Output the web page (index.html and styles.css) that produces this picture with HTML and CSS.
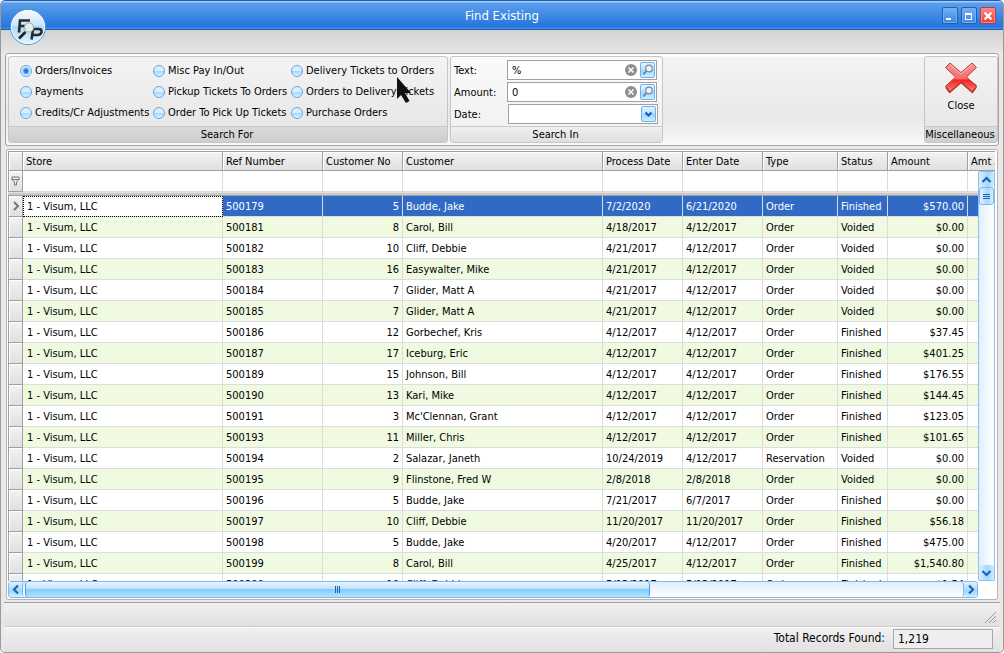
FILE: index.html
```html
<!DOCTYPE html>
<html lang="en">
<head>
<meta charset="utf-8">
<title>Find Existing</title>
<link rel="stylesheet" href="styles.css">
</head>
<body>
<div class="window">
  <header class="titlebar">
    <h1 class="title">Find Existing</h1>
    <div class="window-buttons">
      <button class="win-btn" aria-label="Minimize"><svg width="14" height="14" viewBox="0 0 14 14"><path d="M3 10h5" stroke="#fff" stroke-width="2"/></svg></button>
      <button class="win-btn" aria-label="Maximize"><svg width="14" height="14" viewBox="0 0 14 14"><path d="M3.500 4v7M9.500 4v7M3 10.500h7" stroke="#fff"/><path d="M3 5h7" stroke="#fff" stroke-width="2"/></svg></button>
      <button class="win-btn win-close" aria-label="Close window"><svg width="14" height="14" viewBox="0 0 14 14"><path d="M3.500 3.500l7 7M10.500 3.500l-7 7" stroke="#fff" stroke-width="2.400"/></svg></button>
    </div>
  </header>
  <svg class="app-icon" width="38" height="38" viewBox="0 0 38 38" aria-hidden="true">
    <defs>
      <linearGradient id="orb" x2="0" y2="1"><stop offset="0" stop-color="#f7fcff"/><stop offset=".45" stop-color="#c9e6fb"/><stop offset=".5" stop-color="#a9d7f9"/><stop offset="1" stop-color="#e2f7ff"/></linearGradient>
    </defs>
    <circle cx="19" cy="19" r="17.500" fill="url(#orb)" stroke="#4c8fd4"/>
    <circle cx="19" cy="19" r="16.500" fill="none" stroke="#fff" opacity=".8"/>
    <path d="M10 24.500L11 12.500h10M10.500 18h6" fill="none" stroke="#2b2b2b" stroke-width="2.600"/>
    <path d="M22.500 31.500L24 21.500M20.500 21h9q3.500 0 3 3t-4 3h-5" fill="none" stroke="#2b2b2b" stroke-width="2.600"/>
    <path d="M16.500 24l-6.500 6.500" stroke="#222" stroke-width="2.600"/>
    <circle cx="20" cy="19.500" r="4.500" fill="#e2efeb" stroke="#9fb1af" stroke-width="1.200"/>
  </svg>
  <section class="ribbon">
    <fieldset class="group group-for">
      <div class="group-body radios">
        <label class="radio"><input type="radio" name="kind" checked>Orders/Invoices</label>
        <label class="radio"><input type="radio" name="kind">Misc Pay In/Out</label>
        <label class="radio"><input type="radio" name="kind">Delivery Tickets to Orders</label>
        <label class="radio"><input type="radio" name="kind">Payments</label>
        <label class="radio"><input type="radio" name="kind">Pickup Tickets To Orders</label>
        <label class="radio"><input type="radio" name="kind">Orders to Delivery Tickets</label>
        <label class="radio"><input type="radio" name="kind">Credits/Cr Adjustments</label>
        <label class="radio"><input type="radio" name="kind">Order To Pick Up Tickets</label>
        <label class="radio"><input type="radio" name="kind">Purchase Orders</label>
      </div>
      <div class="caption">Search For</div>
    </fieldset>
    <fieldset class="group group-in">
      <div class="group-body fields">
        <label for="text">Text:</label>
        <div class="field">
          <input id="text" type="text" value="%">
          <button class="clear" aria-label="Clear text"><svg width="12" height="12" viewBox="0 0 12 12"><circle cx="6" cy="6" r="6" fill="#8e8e8e"/><path d="M3.500 3.500l5 5M8.500 3.500l-5 5" stroke="#fff" stroke-width="1.500"/></svg></button>
          <button class="blue-btn" aria-label="Find text"><svg width="13" height="14" viewBox="0 0 13 14"><circle cx="8" cy="5.500" r="3.300" fill="#e4f4ff" stroke="#76899c" stroke-width="1.200"/><path d="M5.500 8L2 11.500" stroke="#76899c" stroke-width="1.800"/></svg></button>
        </div>
        <label for="amount">Amount:</label>
        <div class="field">
          <input id="amount" type="text" value="0">
          <button class="clear" aria-label="Clear amount"><svg width="12" height="12" viewBox="0 0 12 12"><circle cx="6" cy="6" r="6" fill="#8e8e8e"/><path d="M3.500 3.500l5 5M8.500 3.500l-5 5" stroke="#fff" stroke-width="1.500"/></svg></button>
          <button class="blue-btn" aria-label="Find amount"><svg width="13" height="14" viewBox="0 0 13 14"><circle cx="8" cy="5.500" r="3.300" fill="#e4f4ff" stroke="#76899c" stroke-width="1.200"/><path d="M5.500 8L2 11.500" stroke="#76899c" stroke-width="1.800"/></svg></button>
        </div>
        <label for="date">Date:</label>
        <div class="field field-date">
          <select id="date"><option></option></select>
          <span class="blue-btn date-arrow"><svg width="13" height="14" viewBox="0 0 13 14"><path d="M3.500 5.500l3 3 3-3" fill="none" stroke="#1460b8" stroke-width="2.200"/></svg></span>
        </div>
      </div>
      <div class="caption">Search In</div>
    </fieldset>
    <fieldset class="group group-misc">
      <button class="close-btn">
        <svg width="34" height="34" viewBox="0 0 34 34" aria-hidden="true">
          <defs><linearGradient id="red" x2="0" y2="1"><stop offset="0" stop-color="#f29a9a"/><stop offset=".54" stop-color="#fb6a6a"/><stop offset=".6" stop-color="#f42323"/><stop offset="1" stop-color="#fb8070"/></linearGradient></defs>
          <path d="M1.500 27l4 5.500L17 22.500 28.500 32.500l4-5.500v-3L22 16 17 18 2 24z" fill="#b52c10"/>
          <path d="M6 2L17 11.500 28 2l4.500 4.500L22.500 16 32.500 25.500l-4.500 5L17 21 6 30.500l-4.500-5L11.500 16 1.500 6.500z" fill="url(#red)" stroke="#c23a3a" stroke-linejoin="round"/>
          <path d="M6 3.500l11 9.500 11-9.500" fill="none" stroke="#ffc4c4" stroke-width=".8"/>
        </svg>
        Close
      </button>
      <div class="caption">Miscellaneous</div>
    </fieldset>
  </section>
  <main class="grid">
    <div class="rows">
      <table class="records">
        <colgroup><col class="c-mark"><col class="c-store"><col class="c-ref"><col class="c-no"><col class="c-name"><col class="c-date"><col class="c-date"><col class="c-type"><col class="c-status"><col class="c-amount"><col></colgroup>
        <thead>
          <tr><th></th><th>Store</th><th>Ref Number</th><th>Customer No</th><th>Customer</th><th>Process Date</th><th>Enter Date</th><th>Type</th><th>Status</th><th>Amount</th><th>Amt Applied</th></tr>
          <tr class="filter"><td class="mark"><svg width="9" height="10" viewBox="0 0 9 10"><path d="M1 1h7v2.500L5.500 6v3h-2V6L1 3.500zM1 3.500h7" fill="none" stroke="#777"/></svg></td><td></td><td></td><td></td><td></td><td></td><td></td><td></td><td></td><td></td><td></td></tr>
          <tr class="divider"><td colspan="11"></td></tr>
        </thead>
        <tbody id="records"></tbody>
      </table>
      <div class="vscroll">
        <button class="sb-btn" aria-label="Scroll up"><svg width="11" height="8" viewBox="0 0 11 8"><path d="M1.500 6l4-4 4 4" fill="none" stroke="#1565bd" stroke-width="2.200"/></svg></button>
        <div class="vthumb"><i></i><i></i><i></i></div>
        <button class="sb-btn sb-down" aria-label="Scroll down"><svg width="11" height="8" viewBox="0 0 11 8"><path d="M1.500 2l4 4 4-4" fill="none" stroke="#1565bd" stroke-width="2.200"/></svg></button>
      </div>
    </div>
    <div class="hscroll">
      <button class="sb-btn" aria-label="Scroll left"><svg width="8" height="11" viewBox="0 0 8 11"><path d="M6 1.500l-4 4 4 4" fill="none" stroke="#1565bd" stroke-width="2.200"/></svg></button>
      <div class="htrack"><div class="hthumb"><i></i><i></i><i></i></div></div>
      <button class="sb-btn" aria-label="Scroll right"><svg width="8" height="11" viewBox="0 0 8 11"><path d="M2 1.500l4 4-4 4" fill="none" stroke="#1565bd" stroke-width="2.200"/></svg></button>
    </div>
  </main>
  <div class="bar"><svg width="12" height="12" viewBox="0 0 12 12"><path d="M1 12L12 1M5 12l7-7M9 12l3-3" stroke="#999"/></svg></div>
  <footer class="bar status">
    <label for="total">Total Records Found:</label>
    <input id="total" type="text" value="1,219" readonly>
  </footer>
  <svg class="pointer" width="18" height="29" viewBox="0 0 18 29" aria-hidden="true"><path d="M2 1v22l4-4 5 8 3.500-2-4.500-8h6z" fill="#111"/></svg>
</div>
<script src="records.js"></script>
</body>
</html>
```

FILE: styles.css
```css
* { box-sizing: border-box; }
body {
  margin: 0;
  font: 11px/13px "DejaVu Sans Condensed", "Noto Sans", sans-serif;
  color: #000;
}
input, button, select { font: inherit; color: inherit; margin: 0; padding: 0; }
button { border: 0; background: none; }
svg { display: block; flex: none; }
.window {
  position: relative;
  display: flex;
  flex-direction: column;
  height: 100vh;
  border-left: 1px solid #999;
  border-right: 1px solid #999;
  border-bottom: 1px solid #999;
  border-radius: 5px;
  background: #e9e9e9;
  overflow: hidden;
}
.titlebar {
  display: flex;
  align-items: center;
  justify-content: center;
  position: relative;
  height: 30px;
  margin: 0 -1px;
  padding-top: 2px;
  flex: none;
  border: 1px solid #1c62b4;
  border-bottom-color: #1b5fb0;
  border-radius: 5px 5px 0 0;
  background: linear-gradient(#a6cbf7 0 1px, #5c9fec 2px, #2474dc 26px, #4488e2 27px);
}
.title { margin: 0; font: 13px/18px "DejaVu Sans Condensed", "Noto Sans", sans-serif; color: #fff; }
.window-buttons { position: absolute; right: 7px; top: 6px; display: flex; gap: 3px; }
.win-btn {
  display: flex;
  align-items: center;
  justify-content: center;
  width: 16px;
  height: 17px;
  border: 1px solid #1e60b3;
  border-radius: 2px;
  background: linear-gradient(#75b0f2, #3b86e1);
  box-shadow: inset 0 0 0 1px #76aef0;
}
.win-close { border-color: #b33a4d; background: linear-gradient(#f88, #e93b3b); box-shadow: inset 0 0 0 1px #f58a8a; }
.app-icon { position: absolute; left: 8px; top: 8px; z-index: 1; }
.ribbon {
  display: flex;
  gap: 2px;
  flex: none;
  margin: 23px 4px 3px;
  padding: 2px 0 2px 2px;
  border: 1px solid #a3a3a3;
  border-radius: 3px;
  background: linear-gradient(#fff 0 2px, #f3f3f3 3px, #e9e9e9 70%, #f8f8f8);
}
.window::before {
  content: "";
  position: absolute;
  top: 30px;
  left: 0;
  right: 0;
  height: 23px;
  background: linear-gradient(#d2d2d2, #e6e6e6);
}
.group {
  display: flex;
  flex-direction: column;
  height: 87px;
  min-width: 0;
  margin: 0;
  padding: 0;
  border: 1px solid #c6c6c6;
  border-radius: 3px;
  background: linear-gradient(#f3f3f3, #e5e5e5);
}
.group-for { width: 440px; }
.group-in { width: 213px; background: linear-gradient(#fafafa, #f0f0f0); }
.group-misc { width: 74px; margin-left: auto; }
.group-body { flex: 1; min-height: 0; }
.caption {
  height: 16px;
  padding-right: 2px;
  border-top: 1px solid #c8c8c8;
  text-align: center;
  line-height: 16px;
  background: linear-gradient(#dadada, #cecece);
}
.group-in .caption { background: linear-gradient(#f0f0f0, #dfdfdf); }
.radios {
  display: grid;
  grid-template-columns: 133px 138px 1fr;
  grid-auto-rows: 21px;
  padding: 3px 0 0 11px;
}
.radio { display: flex; align-items: center; gap: 3px; white-space: nowrap; }
.radio input {
  appearance: none;
  width: 12px;
  height: 12px;
  border: 1px solid #6ca4e4;
  border-radius: 50%;
  background: linear-gradient(#d9eeff 0 45%, #a3d6fb 50%, #d8f4ff);
}
.radio input:checked {
  background: radial-gradient(circle, #1c72cf 0 1px, #3c90e2 2px, #d2ebff 4px);
}
.fields {
  display: grid;
  grid-template-columns: 53px 150px;
  grid-auto-rows: 20px;
  row-gap: 2px;
  align-items: center;
  padding: 3px 0 0 3px;
}
.field {
  display: flex;
  align-items: center;
  position: relative;
  height: 20px;
  border: 1px solid #a0a0a0;
  background: #fff;
}
.field-date { margin-left: 1px; margin-right: -1px; }
.field input { flex: 1; min-width: 0; height: 18px; padding: 0 4px; border: 0; background: none; outline: 0; }
.field select { flex: 1; height: 18px; appearance: none; border: 0; background: none; }
.clear { margin-right: 3px; }
.blue-btn {
  display: flex;
  width: 15px;
  height: 16px;
  margin-right: 1px;
  border: 1px solid #6db0ec;
  border-radius: 2px;
  background: linear-gradient(#e5f4ff, #bee2fc 45%, #9bd3fa 50%, #d0f0ff);
}
.date-arrow { position: absolute; right: 0; top: 1px; pointer-events: none; }
.close-btn { display: flex; flex: 1; flex-direction: column; align-items: center; gap: 4px; padding-top: 4px; }
.grid {
  display: flex;
  flex: 1;
  flex-direction: column;
  min-height: 0;
  margin: 0 5px 2px;
  padding: 1px 2px 1px 1px;
  border: 1px solid #b5b5b5;
  border-radius: 2px;
  background: #fff;
}
.rows { position: relative; flex: 1; min-height: 0; overflow: hidden; }
.records { width: 100%; table-layout: fixed; border-collapse: separate; border-spacing: 0; }
.c-mark { width: 15px; }
.c-store, .c-name { width: 200px; }
.c-ref { width: 100px; }
.c-no, .c-date, .c-amount { width: 80px; }
.c-type { width: 75px; }
.c-status { width: 50px; }
.records th {
  height: 20px;
  padding: 0 3px;
  border: solid #a0a0a0;
  border-width: 1px 1px 1px 0;
  background: linear-gradient(#f3f3f3, #e0e0e0);
  box-shadow: inset 1px 1px #fff;
  font-weight: normal;
  text-align: left;
  white-space: nowrap;
  overflow: hidden;
}
.records th:last-child { padding-right: 0; border-right: 0; }
.records th:first-child, .records .mark { border-left: 1px solid #a0a0a0; }
.records td {
  height: 21px;
  padding: 0 3px;
  border: solid #dcdcdc;
  border-width: 0 1px 1px 0;
  white-space: nowrap;
  overflow: hidden;
}
.records .store { padding-left: 4px; }
.records .mark {
  padding: 0 2px;
  border-right-color: #a0a0a0;
  border-bottom-color: #a0a0a0;
  background: linear-gradient(#f2f2f2, #e0e0e0);
  box-shadow: inset 1px 1px #fff;
}
.records .divider td { height: 4px; padding: 0; border: 0; background: linear-gradient(#e0e0e0 0 1px, #cacaca 1px 3px, #a0a0a0 3px); }
tbody tr:nth-child(even) td { background: #effae0; }
tbody tr:nth-child(even) .mark { background: linear-gradient(#f2f2f2, #e0e0e0); }
.records .num { text-align: right; }
.records .sel td { background: #316ac5; color: #fff; }
.records .sel .mark { background: linear-gradient(#f2f2f2, #e0e0e0); }
.records .sel .store { background: #fff; color: #000; outline: 1px dotted #000; outline-offset: -1px; }
.vscroll {
  position: absolute;
  top: 20px;
  right: 0;
  bottom: 0;
  display: flex;
  flex-direction: column;
  width: 17px;
  border: 1px solid #8dc0f0;
  border-radius: 2px;
  background: linear-gradient(90deg, #e1effc, #fff);
}
.sb-btn {
  display: flex;
  align-items: center;
  justify-content: center;
  flex: none;
  width: 15px;
  height: 15px;
  border-radius: 2px;
  background: linear-gradient(90deg, #d9eeff, #a5d7fb 60%, #cdefff);
}
.sb-down { margin-top: auto; }
.vthumb {
  display: flex;
  flex-direction: column;
  align-items: center;
  justify-content: center;
  gap: 1px;
  height: 18px;
  border: 1px solid #7db6ed;
  border-radius: 3px;
  background: linear-gradient(90deg, #e4f3ff, #a6d9fb 60%, #d5f3ff);
}
.vthumb i { width: 7px; height: 1px; background: #1565bd; }
.hscroll {
  display: flex;
  flex: none;
  height: 17px;
  margin-right: 17px;
  border: 1px solid #7db8ef;
  border-radius: 3px;
  background: linear-gradient(#dcedfc, #fff);
}
.hscroll .sb-btn { width: 13px; background: linear-gradient(#e0f2ff, #a5d7fb 60%, #cdefff); }
.htrack { flex: 1; padding-left: 2px; border: solid #7db6ed; border-width: 0 1px; border-radius: 3px; }
.hthumb {
  display: flex;
  align-items: center;
  justify-content: center;
  gap: 1px;
  width: 66.6%;
  height: 15px;
  border: solid #4c9ae0;
  border-width: 0 1px;
  border-radius: 3px;
  background: linear-gradient(#e9f6ff, #bce2fd 45%, #86cbfb 50%, #b4e3fe);
}
.hthumb i { width: 1px; height: 7px; background: #1565bd; }
.bar {
  display: flex;
  align-items: flex-end;
  justify-content: flex-end;
  flex: none;
  height: 24px;
  margin: 0 3px;
  padding: 0 4px 3px 0;
  border-top: 1px solid #a0a0a0;
  background: linear-gradient(#f1f1f1, #e0e0e0);
}
.status {
  align-items: center;
  gap: 8px;
  height: 26px;
  padding: 0 7px 2px 0;
  border-top-color: #ccc;
  box-shadow: inset 0 1px #fff;
  font-size: 12px;
}
.status input { width: 100px; height: 20px; padding: 0 4px; border: 1px solid #a8a8a8; background: #eee; outline: 0; }
.pointer { position: absolute; left: 394px; top: 76px; pointer-events: none; }
```

FILE: records.js
```js
const records = [
  ["500179", 5, "Budde, Jake", "7/2/2020", "6/21/2020", "Order", "Finished", "$570.00"],
  ["500181", 8, "Carol, Bill", "4/18/2017", "4/12/2017", "Order", "Voided", "$0.00"],
  ["500182", 10, "Cliff, Debbie", "4/21/2017", "4/12/2017", "Order", "Voided", "$0.00"],
  ["500183", 16, "Easywalter, Mike", "4/21/2017", "4/12/2017", "Order", "Voided", "$0.00"],
  ["500184", 7, "Glider, Matt A", "4/21/2017", "4/12/2017", "Order", "Voided", "$0.00"],
  ["500185", 7, "Glider, Matt A", "4/21/2017", "4/12/2017", "Order", "Voided", "$0.00"],
  ["500186", 12, "Gorbechef, Kris", "4/12/2017", "4/12/2017", "Order", "Finished", "$37.45"],
  ["500187", 17, "Iceburg, Eric", "4/12/2017", "4/12/2017", "Order", "Finished", "$401.25"],
  ["500189", 15, "Johnson, Bill", "4/12/2017", "4/12/2017", "Order", "Finished", "$176.55"],
  ["500190", 13, "Kari, Mike", "4/12/2017", "4/12/2017", "Order", "Finished", "$144.45"],
  ["500191", 3, "Mc'Clennan, Grant", "4/12/2017", "4/12/2017", "Order", "Finished", "$123.05"],
  ["500193", 11, "Miller, Chris", "4/12/2017", "4/12/2017", "Order", "Finished", "$101.65"],
  ["500194", 2, "Salazar, Janeth", "10/24/2019", "4/12/2017", "Reservation", "Voided", "$0.00"],
  ["500195", 9, "Flinstone, Fred W", "2/8/2018", "2/8/2018", "Order", "Voided", "$0.00"],
  ["500196", 5, "Budde, Jake", "7/21/2017", "6/7/2017", "Order", "Finished", "$0.00"],
  ["500197", 10, "Cliff, Debbie", "11/20/2017", "11/20/2017", "Order", "Finished", "$56.18"],
  ["500198", 5, "Budde, Jake", "4/20/2017", "4/12/2017", "Order", "Finished", "$475.00"],
  ["500199", 8, "Carol, Bill", "4/25/2017", "4/12/2017", "Order", "Finished", "$1,540.80"],
  ["500200", 10, "Cliff, Debbie", "5/13/2017", "5/13/2017", "Order", "Finished", "$1.54"]
];
const arrow = '<svg width="9" height="10" viewBox="0 0 9 10"><path d="M3 1l4 4-4 4" fill="none" stroke="#777" stroke-width="2"/></svg>';
document.getElementById("records").innerHTML = records.map((r, i) =>
  `<tr${i ? "" : ' class="sel"'}><td class="mark">${i ? "" : arrow}</td><td class="store">1 - Visum, LLC</td>` +
  r.map((v, c) => `<td${c === 1 || c === 7 ? ' class="num"' : ""}>${v}</td>`).join("") + "<td></td></tr>"
).join("");
```
